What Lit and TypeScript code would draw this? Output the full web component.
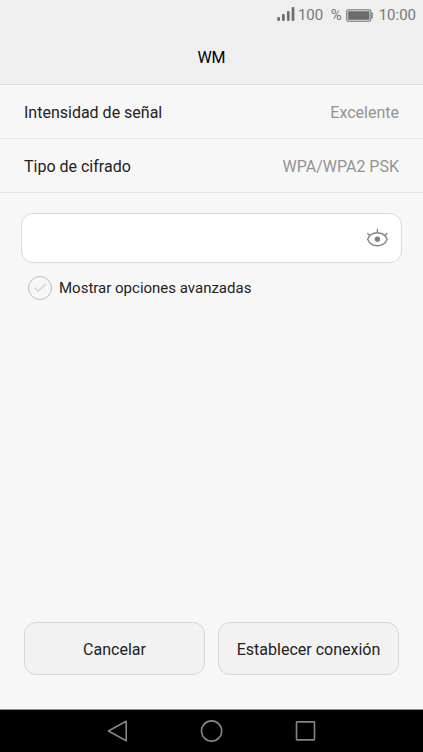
import { LitElement, css, html, svg } from "lit";
import { customElement, property, state } from "lit/decorators.js";

@customElement("status-bar")
export class StatusBar extends LitElement {
  static styles = css`
    :host {
      display: flex;
      justify-content: flex-end;
      align-items: center;
      height: 30px;
      padding-right: 7px;
      color: #777;
      font-size: 15px;
      line-height: 20px;
    }
    svg {
      display: block;
    }
    .level {
      margin: 0 4px 0 3px;
      white-space: pre;
    }
    .time {
      margin-left: 6px;
    }
  `;

  render() {
    return html`
      <svg width="18" height="16" viewBox="0 0 18 16" fill="#707070" aria-label="Señal móvil">
        <rect x="0.2" y="10" width="2.8" height="4" rx="1" />
        <rect x="5" y="7" width="2.8" height="7" rx="1" />
        <rect x="10" y="4" width="2.6" height="10" rx="1" />
        <rect x="14.6" y="0" width="2.8" height="14" rx="1" />
      </svg>
      <span class="level">100  %</span>
      <svg width="27" height="13" viewBox="0 0 27 13" aria-label="Batería">
        <rect x="0.7" y="0.7" width="24.2" height="11.6" rx="1.8" fill="#dedede" stroke="#777" stroke-width="1.1" />
        <rect x="2.2" y="2.2" width="21.2" height="8.6" fill="#6c6c6c" />
        <path d="M25.4 3.5h.6q.7 0 .7.8v4.4q0 .8-.7.8h-.6z" fill="#6c6c6c" />
      </svg>
      <span class="time">10:00</span>
    `;
  }
}

@customElement("nav-bar")
export class NavBar extends LitElement {
  static styles = css`
    :host {
      display: grid;
      grid-template-columns: repeat(3, 1fr);
      height: 42px;
      padding: 0 16.667%;
      background: #000;
      border-top: 1px solid #8f9393;
    }
    button {
      display: flex;
      align-items: center;
      justify-content: center;
      padding: 0;
      border: 0;
      background: none;
    }
    svg {
      display: block;
      fill: none;
      stroke: #858585;
      stroke-width: 1.6;
      stroke-linejoin: round;
    }
  `;

  private item(label: string, shape: unknown) {
    return html`<button type="button" aria-label=${label}>
      <svg width="24" height="24" viewBox="0 0 24 24">${shape}</svg>
    </button>`;
  }

  render() {
    return html`
      ${this.item("Atrás", svg`<path d="M20.2 2.3V21.7L2.4 12Z" />`)}
      ${this.item("Inicio", svg`<circle cx="11.6" cy="12" r="10.1" />`)}
      ${this.item("Recientes", svg`<rect x="2.5" y="2.9" width="18" height="18" rx="0.6" />`)}
    `;
  }
}

@customElement("app-root")
export class AppRoot extends LitElement {
  @property() network = "WM";
  @state() private visible = false;
  @state() private advanced = false;

  static styles = css`
    :host {
      display: flex;
      flex-direction: column;
      min-height: 100vh;
      box-sizing: border-box;
      background: #f7f7f7;
      color: #222;
      font-family: Roboto, "Liberation Sans", sans-serif;
      font-size: 16px;
      line-height: 20px;
    }
    header {
      background: #efefef;
      border-bottom: 1px solid #dadada;
    }
    h1 {
      margin: 0;
      padding: 18px 0 16px;
      color: #000;
      font-size: 16px;
      line-height: 20px;
      font-weight: 400;
      text-align: center;
    }
    main {
      flex: 1;
      display: flex;
      flex-direction: column;
    }
    dl {
      margin: 0;
    }
    .row {
      display: flex;
      justify-content: space-between;
      padding: 18px 24px 15px;
      border-bottom: 1px solid #e5e5e5;
    }
    dd {
      margin: 0;
      color: #939393;
    }
    form {
      flex: 1;
      display: flex;
      flex-direction: column;
    }
    .field {
      display: flex;
      align-items: center;
      height: 48px;
      margin: 20px 21px 13px;
      padding: 0 12px 0 16px;
      border: 1px solid #d9d9d9;
      border-radius: 12px;
      background: #fff;
    }
    .password {
      flex: 1;
      min-width: 0;
      padding: 0;
      border: 0;
      outline: 0;
      background: none;
      font: inherit;
      color: inherit;
    }
    .eye {
      padding: 0;
      border: 0;
      background: none;
    }
    svg {
      display: block;
    }
    .option {
      display: flex;
      align-items: center;
      align-self: flex-start;
      gap: 7px;
      margin-left: 28px;
      font-size: 15px;
    }
    .tick {
      display: grid;
      width: 24px;
      height: 24px;
    }
    .tick > * {
      grid-area: 1 / 1;
    }
    .tick input {
      appearance: none;
      width: 24px;
      height: 24px;
      box-sizing: border-box;
      margin: 0;
      border: 1px solid #bdbdbd;
      border-radius: 50%;
    }
    .tick svg {
      pointer-events: none;
      color: #d4d4d4;
    }
    .tick input:checked + svg {
      color: #00a0a8;
    }
    .actions {
      display: grid;
      grid-template-columns: 1fr 1fr;
      gap: 13px;
      margin-top: auto;
      padding: 24px 24px 34px;
    }
    .action {
      height: 53px;
      padding: 2px 0 0;
      border: 1px solid #d6d6d6;
      border-radius: 12px;
      background: #f2f2f2;
      color: inherit;
      font: inherit;
    }
  `;

  render() {
    return html`
      <header>
        <status-bar></status-bar>
        <h1>${this.network}</h1>
      </header>
      <main>
        <dl>
          <div class="row"><dt>Intensidad de señal</dt><dd>Excelente</dd></div>
          <div class="row"><dt>Tipo de cifrado</dt><dd>WPA/WPA2 PSK</dd></div>
        </dl>
        <form @submit=${(e: Event) => e.preventDefault()}>
          <div class="field">
            <input
              class="password"
              type=${this.visible ? "text" : "password"}
              aria-label="Contraseña"
              autocomplete="off"
            />
            <button
              class="eye"
              type="button"
              aria-label="Mostrar contraseña"
              @click=${() => (this.visible = !this.visible)}
            >
              <svg width="24" height="20" viewBox="0 0 24 20" fill="none" stroke="#858585" stroke-width="1.4">
                <path d="M2.6 11.3C4.4 7 8.3 4.8 12.4 4.8S20.4 7 22.2 11.3C20.4 15.6 16.5 17.8 12.4 17.8S4.4 15.6 2.6 11.3Z" stroke-linejoin="round" />
                <path d="M12.4 1V4.8M2.4 5.2L5 7.6M22.4 5.2L19.8 7.6" />
                <circle cx="12.4" cy="11.2" r="2.6" fill="#7c7c7c" stroke="none" />
              </svg>
            </button>
          </div>
          <label class="option">
            <span class="tick">
              <input
                type="checkbox"
                .checked=${this.advanced}
                @change=${() => (this.advanced = !this.advanced)}
              />
              <svg width="24" height="24" viewBox="0 0 24 24" fill="none" stroke="currentColor" stroke-width="1.5">
                <path d="M6.6 11.6L10.2 15.2L17.8 7.6" />
              </svg>
            </span>
            Mostrar opciones avanzadas
          </label>
          <div class="actions">
            <button class="action" type="button">Cancelar</button>
            <button class="action" type="submit">Establecer conexión</button>
          </div>
        </form>
      </main>
      <nav-bar></nav-bar>
    `;
  }
}
